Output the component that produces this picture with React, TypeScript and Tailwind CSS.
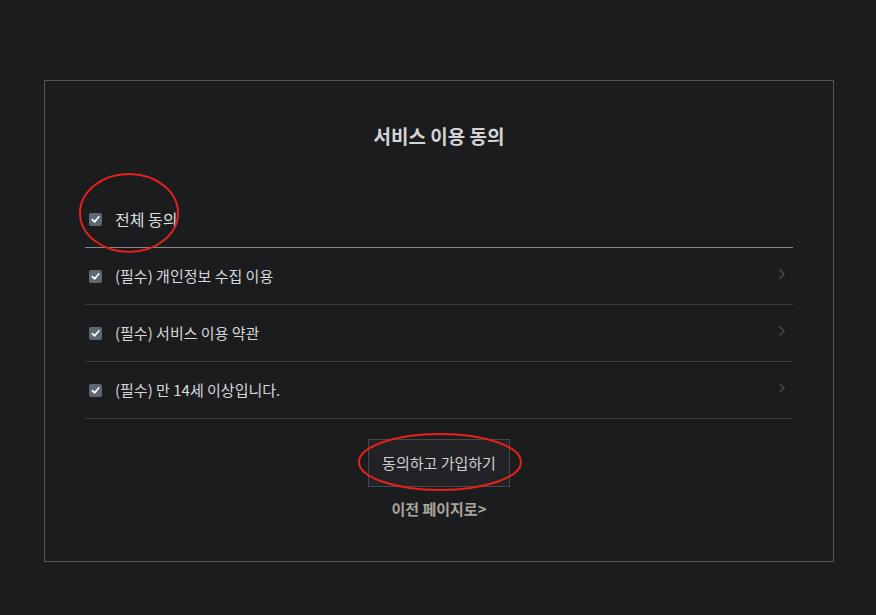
import { useState } from 'react';

const ITEMS = [
  '(필수) 개인정보 수집 이용',
  '(필수) 서비스 이용 약관',
  '(필수) 만 14세 이상입니다.',
];

function Check({ checked, onClick }: { checked: boolean; onClick: () => void }) {
  return (
    <button
      type="button"
      onClick={onClick}
      className={`flex items-center justify-center w-[13px] h-[13px] rounded-[2px] shrink-0 ${
        checked ? 'bg-[#5b6874]' : 'bg-[#2a2b2e] border border-[#666]'
      }`}
    >
      {checked && (
        <svg width="9" height="9" viewBox="0 0 10 10">
          <path d="M1.5 5.2 L4 7.6 L8.6 2.2" fill="none" stroke="#fff" strokeWidth="2" strokeLinecap="round" strokeLinejoin="round" />
        </svg>
      )}
    </button>
  );
}

export default function App() {
  const [checks, setChecks] = useState<boolean[]>([true, true, true]);
  const all = checks.every(Boolean);

  const toggleAll = () => setChecks(checks.map(() => !all));
  const toggle = (i: number) => setChecks(checks.map((c, j) => (j === i ? !c : c)));

  return (
    <div
      className="min-h-[615px] bg-[#1b1c1e] pt-[80px]"
      style={{ fontFamily: '"Noto Sans CJK KR", "Noto Sans", sans-serif' }}
    >
      <div className="relative ml-[44px] w-[790px] h-[482px] border border-[#555659] px-[40px] pt-[43px]">
        <h2 className="text-center text-[19px] leading-[24px] font-bold text-[#d4d4d4] mb-[43px]">서비스 이용 동의</h2>

        <div className="flex items-center h-[57px] pl-[4px] border-b border-[#8c8680]">
          <Check checked={all} onClick={toggleAll} />
          <span className="ml-[13px] text-[16px] text-[#dcdcdc]">전체 동의</span>
        </div>

        {ITEMS.map((label, i) => (
          <div key={label} className="flex items-center h-[57px] pl-[4px] pr-[7px] border-b border-[#3a3b3e]">
            <Check checked={checks[i]} onClick={() => toggle(i)} />
            <span className="ml-[13px] text-[15px] text-[#d8d8d8]">{label}</span>
            <svg className="ml-auto -mt-[4px]" width="8" height="12" viewBox="0 0 8 12">
              <path d="M1.5 1.5 L6 6 L1.5 10.5" fill="none" stroke="#46474a" strokeWidth="1.6" />
            </svg>
          </div>
        ))}

        <div className="flex flex-col items-center mt-[20px]">
          <button
            type="button"
            className="w-[142px] h-[48px] border border-[#46474a] bg-[#222326] text-[15px] text-[#d0d0d0]"
          >
            동의하고 가입하기
          </button>
          <a className="mt-[12px] text-[15px] leading-[20px] font-bold text-[#aaa59d] cursor-pointer">이전 페이지로&gt;</a>
        </div>
      </div>

      <svg className="absolute left-0 top-0 pointer-events-none" width="876" height="615">
        <ellipse cx="129" cy="213" rx="49" ry="39" fill="none" stroke="#e6201a" strokeWidth="2" />
        <ellipse cx="440" cy="462" rx="81" ry="28" fill="none" stroke="#e6201a" strokeWidth="2" />
      </svg>
    </div>
  );
}
